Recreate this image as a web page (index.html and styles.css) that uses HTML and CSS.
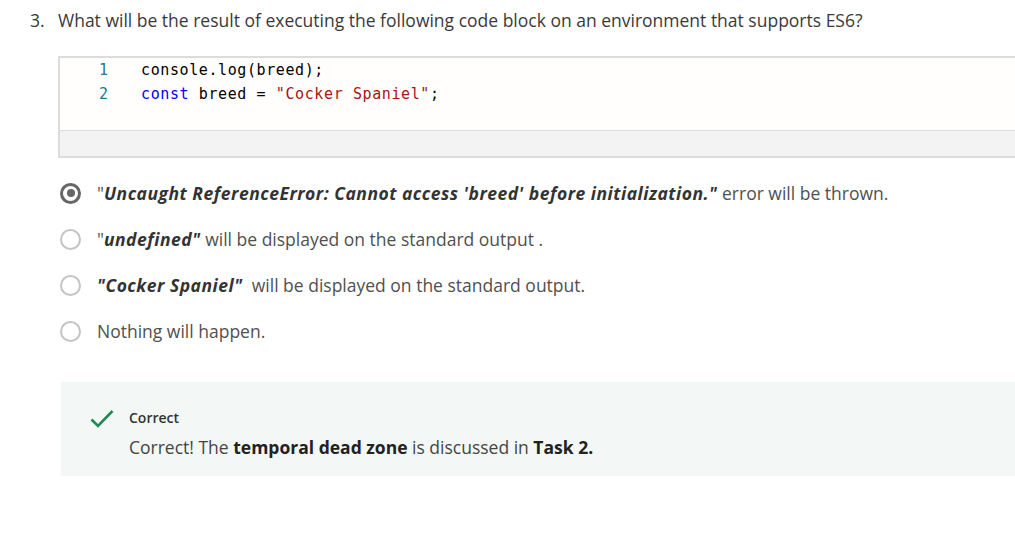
FILE: index.html
```html
<!DOCTYPE html>
<html>
<head>
<meta charset="utf-8">
<link rel="stylesheet" href="styles.css">
</head>
<body>
<div class="question">
  <div class="q-title"><span class="q-num">3.</span><span class="q-text">What will be the result of executing the following code block on an environment that supports ES6?</span></div>
  <div class="code-box">
    <div class="code-area">
      <div class="code-line"><span class="ln">1</span><span class="code">console.log(breed);</span></div>
      <div class="code-line"><span class="ln">2</span><span class="code"><span class="kw">const</span> breed = <span class="str">"Cocker Spaniel"</span>;</span></div>
    </div>
    <div class="code-bar"></div>
  </div>
  <div class="options">
    <div class="option"><span class="radio checked"></span><span class="opt-text">"<b><i>Uncaught ReferenceError: Cannot access 'breed' before initialization."</i></b> error will be thrown.</span></div>
    <div class="option"><span class="radio"></span><span class="opt-text">"<b><i>undefined"</i></b> will be displayed on the standard output .</span></div>
    <div class="option"><span class="radio"></span><span class="opt-text"><b><i>"Cocker Spaniel"</i></b>&nbsp; will be displayed on the standard output.</span></div>
    <div class="option"><span class="radio"></span><span class="opt-text">Nothing will happen.</span></div>
  </div>
  <div class="feedback">
    <svg class="check" width="24" height="20" viewBox="0 0 24 20"><path d="M1.5 10.5 L8 17 L22.5 2" fill="none" stroke="#1e8a52" stroke-width="2.6"/></svg>
    <div class="fb-body">
      <div class="fb-title">Correct</div>
      <div class="fb-text">Correct! The <b>temporal dead zone</b> is discussed in <b>Task 2.</b></div>
    </div>
  </div>
</div>
</body>
</html>
```
FILE: styles.css
```css
html, body { margin: 0; padding: 0; background: #fff; }
body { font-family: "Open Sans", sans-serif; color: #333; overflow: hidden; }
.question { padding: 8px 0 0 30px; }
.q-title { display: flex; font-size: 17.5px; line-height: 24px; color: #3a3a3a; }
.q-num { width: 28px; }
.code-box { margin: 24px 0 0 28px; border: 2px solid #dcdcdc; border-right: none; background: #fffefc; }
.code-area { height: 72px; }
.code-line { display: flex; font-family: "DejaVu Sans Mono", monospace; font-size: 15px; line-height: 24px; letter-spacing: 0.6px; }
.ln { width: 81px; text-align: right; color: #237893; padding-right: 33px; box-sizing: border-box; letter-spacing: 0; }
.code { color: #000; }
.kw { color: #0000ff; }
.str { color: #a31515; }
.code-bar { height: 25px; background: #f3f3f3; border-top: 1px solid #dcdcdc; }
.options { margin-top: 12px; }
.option { display: flex; align-items: center; height: 46px; margin-left: 30px; }
.radio { width: 21px; height: 21px; border: 2px solid #c4c4c4; border-radius: 50%; box-sizing: border-box; margin-right: 16px; position: relative; flex: none; }
.radio.checked { border: 3px solid #666; }
.radio.checked::after { content: ""; position: absolute; left: 3.5px; top: 3.5px; width: 8px; height: 8px; border-radius: 50%; background: #666; }
.opt-text { font-size: 17.5px; color: #505050; }
.opt-text b { color: #333; letter-spacing: 0.5px; }
.feedback { display: flex; margin: 28px 0 0 31px; background: #f3f8f6; height: 94px; box-sizing: border-box; padding: 24px 0 0 29px; }
.check { margin-top: 3px; margin-right: 15px; }
.fb-title { font-size: 14px; font-weight: 600; color: #333; line-height: 24px; }
.fb-text { font-size: 17.5px; color: #444; margin-top: 5px; }
.fb-text b { color: #222; }
```
